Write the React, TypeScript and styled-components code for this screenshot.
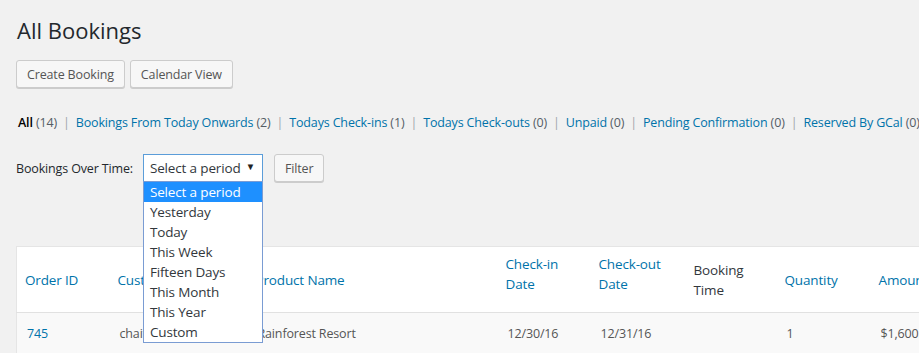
import React from 'react';
import styled, { createGlobalStyle } from 'styled-components';

const GlobalStyle = createGlobalStyle`
  html, body {
    margin: 0;
    padding: 0;
    background: #f1f1f1;
    overflow: hidden;
  }
  body {
    font-family: "Open Sans", "Noto Sans", sans-serif;
    font-size: 12.5px;
    letter-spacing: -0.15px;
    color: #444;
  }
`;

const Page = styled.div`
  padding: 0 0 0 16px;
  width: 1100px;
`;

const Title = styled.h1`
  margin: 0;
  padding: 14px 0 0 1px;
  font-size: 22px;
  font-weight: 400;
  letter-spacing: 0;
  line-height: 32px;
  color: #23282d;
`;

const ButtonRow = styled.div`
  display: flex;
  gap: 5px;
  margin-top: 14px;
`;

const Button = styled.button`
  height: 28px;
  padding: 0 10px;
  font-family: inherit;
  font-size: 12.5px;
  letter-spacing: -0.15px;
  color: #555;
  background: #f7f7f7;
  border: 1px solid #ccc;
  border-radius: 3px;
  box-shadow: 0 1px 0 #ccc;
  cursor: pointer;
`;

const Views = styled.ul`
  display: flex;
  list-style: none;
  margin: 26px 0 0 2px;
  padding: 0;
  line-height: 18px;
  white-space: nowrap;
`;

const ViewItem = styled.li`
  color: #a0a5aa;
`;

const ViewLink = styled.a<{ current?: boolean }>`
  color: ${({ current }) => (current ? '#000' : '#0073aa')};
  font-weight: ${({ current }) => (current ? 600 : 400)};
  text-decoration: none;
`;

const Count = styled.span`
  color: #555d66;
  font-weight: 400;
`;

const Sep = styled.span`
  margin: 0 6px;
`;

const FilterBar = styled.div`
  display: flex;
  align-items: center;
  margin-top: 22px;
`;

const FilterLabel = styled.label`
  color: #23282d;
  margin-right: 10px;
`;

const SelectWrap = styled.div`
  position: relative;
  margin-right: 11px;
`;

const SelectBox = styled.div`
  box-sizing: border-box;
  width: 120px;
  height: 28px;
  display: flex;
  align-items: center;
  justify-content: space-between;
  padding: 0 7px 0 6px;
  background: #fff;
  border: 1px solid #5b9dd9;
  font-size: 13.5px;
  color: #32373c;
`;

const Arrow = styled.span`
  font-size: 9.5px;
  line-height: 1;
  color: #222;
  margin-top: -2px;
`;

const Options = styled.ul`
  position: absolute;
  top: 27px;
  left: 0;
  box-sizing: border-box;
  width: 120px;
  margin: 0;
  padding: 0;
  list-style: none;
  background: #fff;
  border: 1px solid #7a9cd3;
  z-index: 10;
`;

const Option = styled.li<{ selected?: boolean }>`
  height: 20px;
  line-height: 20px;
  padding: 0 6px;
  font-size: 13.5px;
  color: ${({ selected }) => (selected ? '#fff' : '#32373c')};
  background: ${({ selected }) => (selected ? '#1e90ff' : 'transparent')};
`;

const Table = styled.table`
  margin-top: 64px;
  border-collapse: collapse;
  table-layout: fixed;
  width: 1040px;
  background: #fff;
  border: 1px solid #e5e5e5;
`;

const Th = styled.th<{ sortable?: boolean; raised?: boolean }>`
  height: 66px;
  box-sizing: border-box;
  padding: ${({ raised }) => (raised ? '0 9px 12px 8px' : '0 9px 0 8px')};
  text-align: left;
  vertical-align: middle;
  font-size: 13.5px;
  font-weight: 400;
  line-height: 20px;
  color: ${({ sortable }) => (sortable ? '#0073aa' : '#32373c')};
  border-bottom: 1px solid #e1e1e1;
`;

const Tr = styled.tr`
  background: #f9f9f9;
`;

const Td = styled.td`
  height: 41px;
  padding: 0 10px;
  font-size: 12.5px;
  color: #555;
  vertical-align: middle;
  white-space: nowrap;
  overflow: hidden;
`;

const OrderLink = styled.a`
  color: #0073aa;
  text-decoration: none;
`;

const views = [
  { label: 'All', count: 14, current: true },
  { label: 'Bookings From Today Onwards', count: 2 },
  { label: 'Todays Check-ins', count: 1 },
  { label: 'Todays Check-outs', count: 0 },
  { label: 'Unpaid', count: 0 },
  { label: 'Pending Confirmation', count: 0 },
  { label: 'Reserved By GCal', count: 0 },
];

const periods = ['Select a period', 'Yesterday', 'Today', 'This Week', 'Fifteen Days', 'This Month', 'This Year', 'Custom'];

const columns: { label: React.ReactNode; width: number; sortable: boolean; raised?: boolean }[] = [
  { label: 'Order ID', width: 93, sortable: true },
  { label: 'Customer', width: 138, sortable: true },
  { label: 'Product Name', width: 250, sortable: true },
  { label: <>Check-in<br />Date</>, width: 93, sortable: true, raised: true },
  { label: <>Check-out<br />Date</>, width: 95, sortable: true, raised: true },
  { label: <>Booking<br />Time</>, width: 91, sortable: false },
  { label: 'Quantity', width: 94, sortable: true },
  { label: 'Amount', width: 186, sortable: true },
];

export default function App() {
  return (
    <>
      <GlobalStyle />
      <Page>
        <Title>All Bookings</Title>
        <ButtonRow>
          <Button>Create Booking</Button>
          <Button>Calendar View</Button>
        </ButtonRow>

        <Views>
          {views.map((v, i) => (
            <ViewItem key={v.label}>
              <ViewLink href="#" current={v.current}>
                {v.label} <Count>({v.count})</Count>
              </ViewLink>
              {i < views.length - 1 && <Sep>|</Sep>}
            </ViewItem>
          ))}
        </Views>

        <FilterBar>
          <FilterLabel>Bookings Over Time:</FilterLabel>
          <SelectWrap>
            <SelectBox>
              Select a period <Arrow>▼</Arrow>
            </SelectBox>
            <Options>
              {periods.map((p, i) => (
                <Option key={p} selected={i === 0}>{p}</Option>
              ))}
            </Options>
          </SelectWrap>
          <Button>Filter</Button>
        </FilterBar>

        <Table>
          <colgroup>
            {columns.map((c, i) => <col key={i} style={{ width: c.width }} />)}
          </colgroup>
          <thead>
            <tr>
              {columns.map((c, i) => (
                <Th key={i} sortable={c.sortable} raised={c.raised}>{c.label}</Th>
              ))}
            </tr>
          </thead>
          <tbody>
            <Tr>
              <Td><OrderLink href="#">745</OrderLink></Td>
              <Td>chaitanya</Td>
              <Td>Rainforest Resort</Td>
              <Td>12/30/16</Td>
              <Td>12/31/16</Td>
              <Td></Td>
              <Td>1</Td>
              <Td>$1,600.00</Td>
            </Tr>
          </tbody>
        </Table>
      </Page>
    </>
  );
}
